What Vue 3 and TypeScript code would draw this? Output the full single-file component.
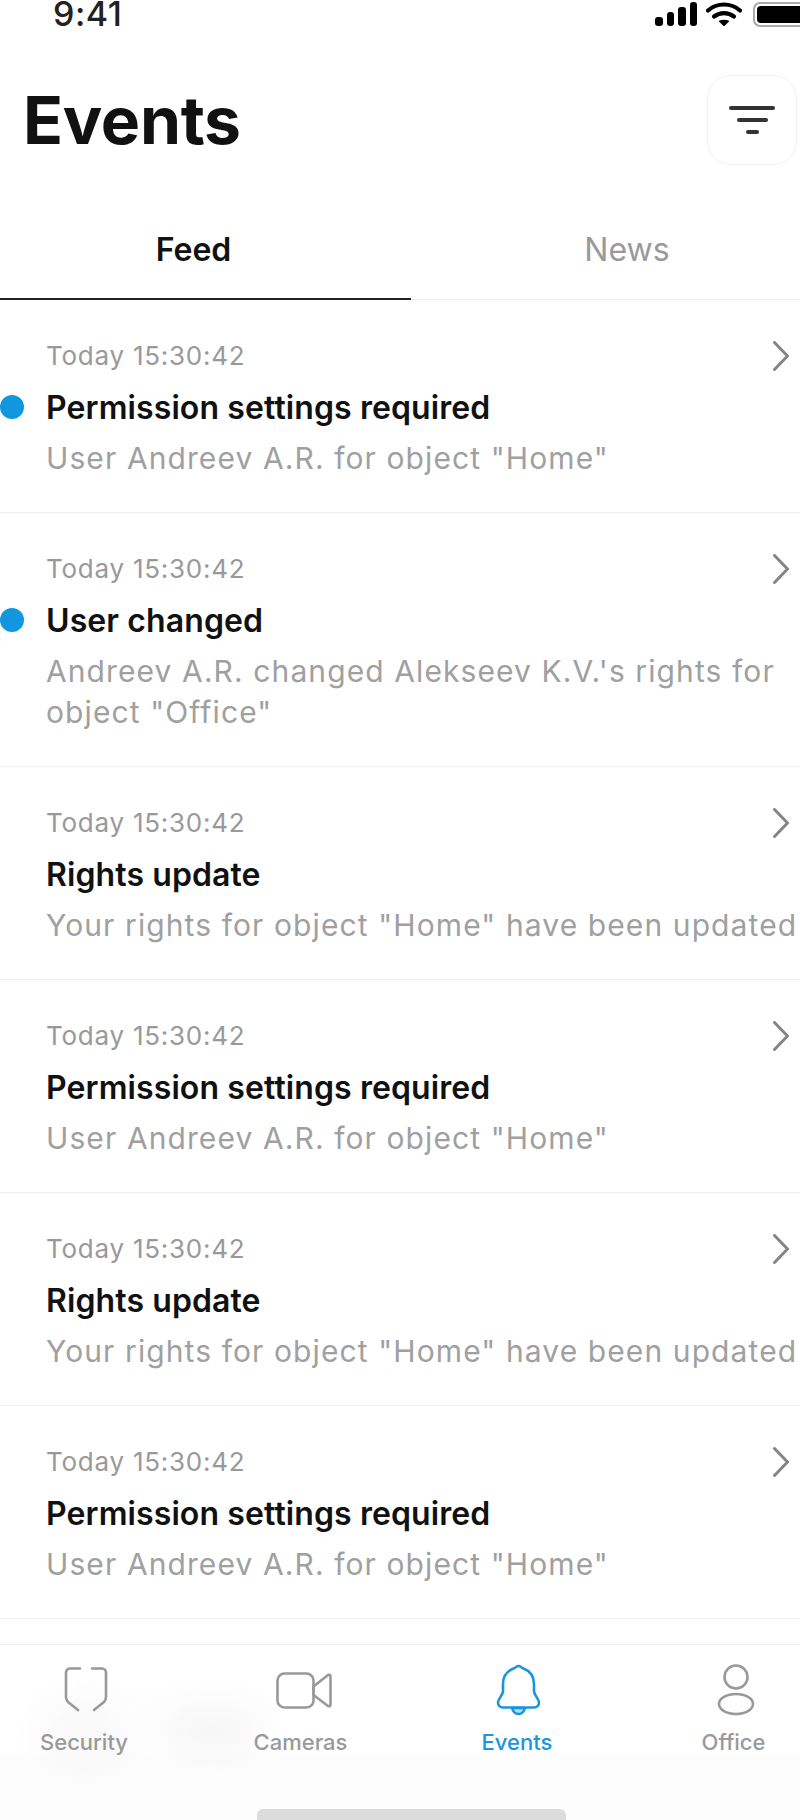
<script setup lang="ts">
interface EventRow {
  title: string
  body: string
  unread?: boolean
}

const events: EventRow[] = [
  { title: 'Permission settings required', body: 'User Andreev A.R. for object "Home"', unread: true },
  { title: 'User changed', body: 'Andreev A.R. changed Alekseev K.V.\'s rights for object "Office"', unread: true },
  { title: 'Rights update', body: 'Your rights for object "Home" have been updated' },
  { title: 'Permission settings required', body: 'User Andreev A.R. for object "Home"' },
  { title: 'Rights update', body: 'Your rights for object "Home" have been updated' },
  { title: 'Permission settings required', body: 'User Andreev A.R. for object "Home"' },
]
</script>

<template>
  <div class="screen">
    <div class="status">
      <span class="time">9:41</span>
      <div class="status-icons">
        <div class="signal">
          <i class="bar b1"></i><i class="bar b2"></i><i class="bar b3"></i><i class="bar b4"></i>
        </div>
        <svg class="wifi" width="36" height="24" viewBox="0 0 36 24" fill="none">
          <path d="M2 8.500C11 .5 25 .5 34 8.500" stroke="#000" stroke-width="4.200" stroke-linecap="round" />
          <path d="M8 14.500c6-4.600 14-4.600 20 0" stroke="#000" stroke-width="4.200" stroke-linecap="round" />
          <path d="M12.500 19c3.500-1.800 7.500-1.800 11 0L18 24.500z" fill="#000" />
        </svg>
        <div class="battery"><div class="battery-fill"></div></div>
      </div>
    </div>

    <header class="header">
      <h1 class="title">Events</h1>
      <button class="filter" type="button" aria-label="Filter">
        <i class="fl l1"></i><i class="fl l2"></i><i class="fl l3"></i>
      </button>
    </header>

    <nav class="tabs">
      <div class="tab active">Feed</div>
      <div class="tab">News</div>
    </nav>

    <main class="list">
      <article v-for="(item, i) in events" :key="i" class="row">
        <span v-if="item.unread" class="dot"></span>
        <div class="row-top">
          <span class="stamp">Today 15:30:42</span>
          <svg class="chevron" width="16" height="30" viewBox="0 0 16 30" fill="none">
            <path d="M1.500 1.500 14.500 15 1.500 28.500" stroke="#858585" stroke-width="3" stroke-linecap="round" stroke-linejoin="round" />
          </svg>
        </div>
        <div class="row-title">{{ item.title }}</div>
        <div class="row-body">{{ item.body }}</div>
      </article>
    </main>

    <footer class="tabbar">
      <div class="haze haze-a"></div>
      <div class="haze haze-b"></div>
      <div class="tabbar-items">
        <div class="item">
          <svg width="56" height="56" viewBox="0 0 56 56" fill="none" stroke="#999" stroke-width="2.600" stroke-linecap="round" stroke-linejoin="round">
            <path d="M24 6.500H14a4 4 0 0 0-4 4V35q0 3 2 5l10 8" />
            <path d="M36 6.500h10a4 4 0 0 1 4 4V35q0 3-2 5l-10 8" />
          </svg>
          <span>Security</span>
        </div>
        <div class="item">
          <svg class="over" width="56" height="56" viewBox="0 0 56 56" fill="none" stroke="#999" stroke-width="2.600" stroke-linecap="round" stroke-linejoin="round">
            <rect x="4.500" y="11.500" width="36" height="34" rx="7" />
            <path d="M40.500 24.500 55 13q2.500-1 2.500 1.500v28q0 2.500-2.500 1.500L40.500 33z" />
          </svg>
          <span>Cameras</span>
        </div>
        <div class="item current">
          <svg width="56" height="56" viewBox="0 0 56 56" fill="none" stroke="#1a96dc" stroke-width="2.600" stroke-linejoin="round">
            <path d="M29.500 4c2 0 3 2 5 2.500C41 9 45 14 45 22v7c0 4 5 8 5 11.500 0 3-2 5-5 5H14c-3 0-5-2-5-5C9 37 14 33 14 29v-7C14 14 18 9 24.500 6.500c2-.5 3-2.500 5-2.500z" />
            <path d="M23 46h13c-1 4-3.500 6-6.500 6s-5.500-2-6.500-6z" fill="#1a96dc" fill-opacity=".35" />
          </svg>
          <span>Events</span>
        </div>
        <div class="item">
          <svg width="56" height="56" viewBox="0 0 56 56" fill="none" stroke="#999" stroke-width="2.600">
            <circle cx="30" cy="15" r="11.500" />
            <ellipse cx="30" cy="42" rx="17" ry="10" />
          </svg>
          <span>Office</span>
        </div>
      </div>
      <div class="home-bar"></div>
    </footer>
  </div>
</template>

<style>
body {
  background: #fff;
}
</style>

<style scoped>
.screen {
  width: 800px;
  height: 1820px;
  display: flex;
  flex-direction: column;
  overflow: hidden;
  background: #fff;
  color: #111;
  font-family: Inter, "Liberation Sans", sans-serif;
}

.status {
  height: 75px;
  flex: none;
  display: flex;
  justify-content: space-between;
  align-items: flex-start;
  padding-left: 53px;
}
.time {
  font-size: 34px;
  line-height: 28px;
  font-weight: 500;
  letter-spacing: .5px;
  color: #222;
}
.status-icons {
  display: flex;
  align-items: flex-start;
  width: 145px;
  padding-top: 2px;
}
.signal {
  flex: none;
  display: flex;
  align-items: flex-end;
  gap: 4px;
  height: 24px;
  width: 51px;
}
.bar {
  display: block;
  width: 7.500px;
  background: #000;
  border-radius: 3px;
}
.b1 { height: 9px; }
.b2 { height: 14px; }
.b3 { height: 19px; }
.b4 { height: 24px; }
.wifi {
  flex: none;
}
.battery {
  flex: none;
  margin-left: 11px;
  width: 60px;
  height: 25px;
  box-sizing: border-box;
  border: 2px solid #aaa;
  border-radius: 7px;
  padding: 2px;
}
.battery-fill {
  height: 100%;
  background: #000;
  border-radius: 4px;
}

.header {
  height: 90px;
  flex: none;
  display: flex;
  align-items: center;
  justify-content: space-between;
  padding: 0 3px 0 23px;
}
.title {
  margin: 0;
  font-size: 66px;
  line-height: 80px;
  font-weight: 700;
  color: #111;
  letter-spacing: -0.3px;
}
.filter {
  width: 90px;
  height: 90px;
  box-sizing: border-box;
  background: #fff;
  border: 1px solid #f1f1f1;
  border-radius: 24px;
  display: flex;
  flex-direction: column;
  align-items: center;
  justify-content: center;
  gap: 8px;
  padding: 0;
}
.fl {
  display: block;
  height: 4px;
  border-radius: 2px;
  background: #333;
}
.l1 { width: 46px; }
.l2 { width: 31px; }
.l3 { width: 13px; }

.tabs {
  height: 135px;
  flex: none;
  display: flex;
  box-sizing: border-box;
  border-bottom: 1px solid #eee;
}
.tab {
  box-sizing: border-box;
  font-size: 32px;
  line-height: 46px;
  height: 135px;
  padding-top: 62px;
  text-align: center;
  color: #999;
}
.tab:first-child {
  width: 411px;
  padding-right: 24px;
}
.tab:last-child {
  width: 389px;
  padding-left: 43px;
}
.tab.active {
  color: #111;
  font-weight: 600;
  border-bottom: 2px solid #222;
}

.list {
  flex: 1;
  min-height: 0;
  overflow: hidden;
}
.row {
  position: relative;
  padding: 38px 11px 33px 46px;
  border-bottom: 1px solid #eee;
}
.dot {
  position: absolute;
  left: 0;
  top: 95px;
  width: 24px;
  height: 24px;
  border-radius: 50%;
  background: #1296e0;
}
.row-top {
  display: flex;
  justify-content: space-between;
  height: 36px;
}
.stamp {
  font-size: 26px;
  line-height: 36px;
  letter-spacing: .75px;
  color: #999;
}
.chevron {
  margin-top: 3px;
  flex: none;
}
.row-title {
  margin-top: 11px;
  font-size: 32px;
  line-height: 46px;
  font-weight: 600;
  letter-spacing: .1px;
  color: #111;
}
.row-body {
  margin-top: 7px;
  margin-right: -11px;
  font-size: 30px;
  line-height: 41px;
  letter-spacing: 1.1px;
  color: #a0a0a0;
}

.tabbar {
  position: relative;
  height: 176px;
  flex: none;
  box-sizing: border-box;
  border-top: 1px solid #eee;
  background: linear-gradient(#fff 0, #fff 105px, #fdfdfd 112px);
  overflow: hidden;
}
.haze {
  position: absolute;
  background: #e8e8e8;
  filter: blur(22px);
}
.haze-a {
  left: 45px;
  top: 60px;
  width: 80px;
  height: 60px;
  opacity: .35;
}
.haze-b {
  left: 165px;
  top: 68px;
  width: 90px;
  height: 34px;
  opacity: .6;
}
.tabbar-items {
  position: relative;
  display: flex;
  gap: 48.500px;
  padding-top: 17px;
}
.item {
  flex: none;
  width: 168px;
  display: flex;
  flex-direction: column;
  align-items: center;
  color: #999;
  font-size: 22px;
  line-height: 30px;
  font-weight: 500;
}
.item svg {
  display: block;
  margin-bottom: 9px;
}
.item .over {
  overflow: visible;
}
.item.current {
  color: #1a96dc;
}
.home-bar {
  position: absolute;
  left: 257px;
  bottom: 0;
  width: 309px;
  height: 11px;
  background: #dcdcdc;
  border-radius: 6px 6px 0 0;
}
</style>
